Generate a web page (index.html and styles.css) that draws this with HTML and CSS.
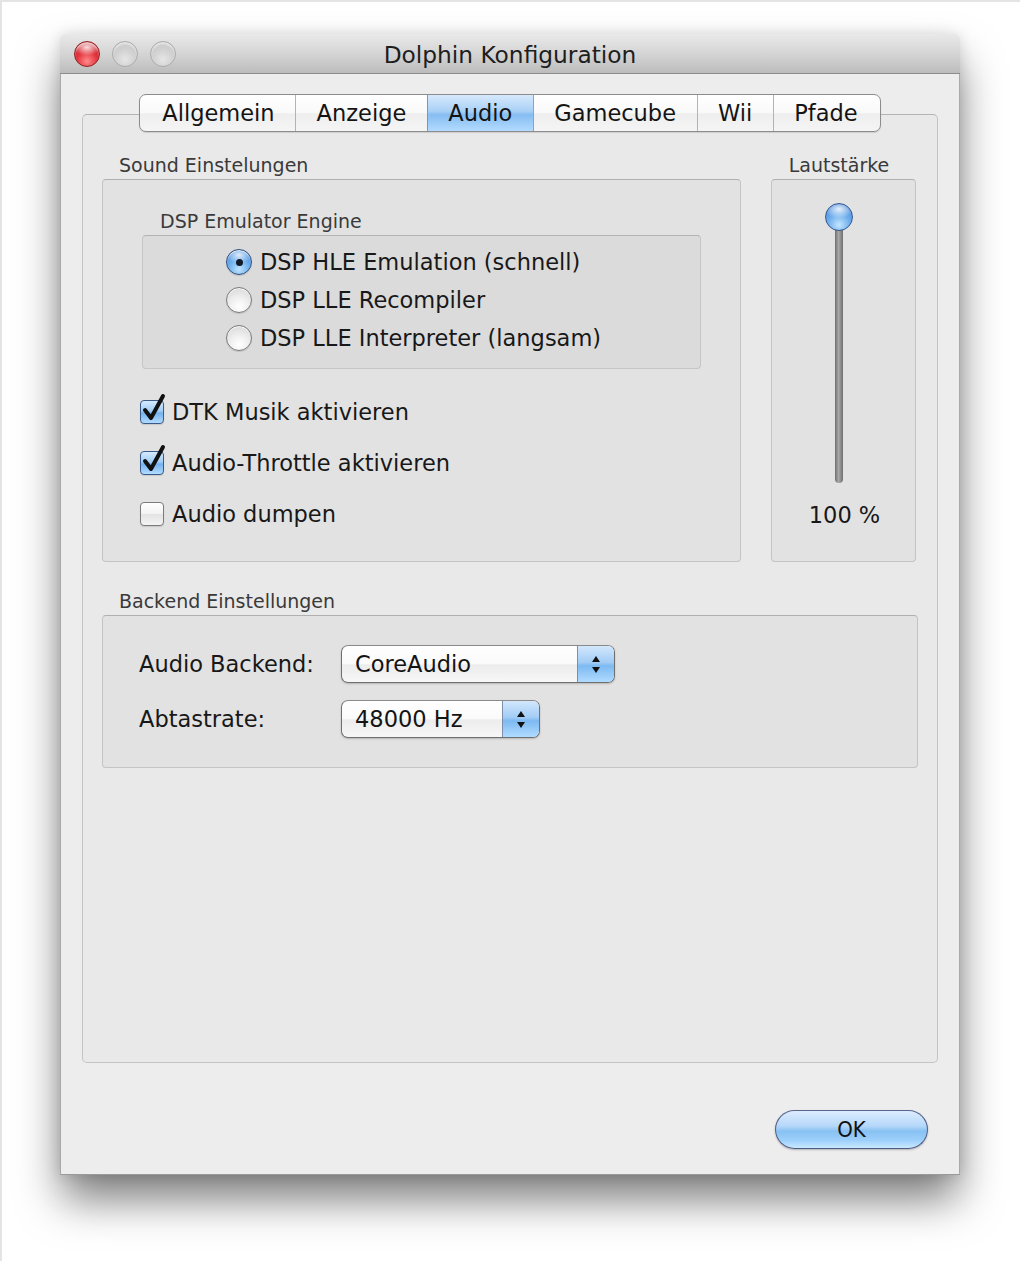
FILE: index.html
```html
<!DOCTYPE html>
<html lang="de">
<head>
<meta charset="utf-8">
<title>Dolphin Konfiguration</title>
<link rel="stylesheet" href="styles.css">
</head>
<body>
<div class="screen">
  <div class="window">
    <div class="titlebar">
      <div class="lights">
        <span class="light close"></span>
        <span class="light"></span>
        <span class="light"></span>
      </div>
      <div class="title">Dolphin Konfiguration</div>
      <div></div>
    </div>
    <div class="content">
      <div class="tabbox">
        <div class="tabs">
          <span class="tab">Allgemein</span>
          <span class="tab">Anzeige</span>
          <span class="tab selected">Audio</span>
          <span class="tab">Gamecube</span>
          <span class="tab">Wii</span>
          <span class="tab">Pfade</span>
        </div>

        <div class="top-row">
          <section class="group sound">
            <div class="group-label">Sound Einstelungen</div>
            <div class="group-box sound-box">
              <div class="sub-label">DSP Emulator Engine</div>
              <div class="inner-box">
                <div class="radio-row"><span class="radio on"></span><span>DSP HLE Emulation (schnell)</span></div>
                <div class="radio-row"><span class="radio"></span><span>DSP LLE Recompiler</span></div>
                <div class="radio-row"><span class="radio"></span><span>DSP LLE Interpreter (langsam)</span></div>
              </div>
              <div class="checks">
                <div class="check-row">
                  <span class="checkbox on"><svg class="tick" viewBox="0 0 28 30" width="28" height="30"><path d="M5 17 L11 25 L23 3" fill="none" stroke="#111" stroke-width="4" stroke-linecap="round" stroke-linejoin="round"/></svg></span>
                  <span>DTK Musik aktivieren</span>
                </div>
                <div class="check-row">
                  <span class="checkbox on"><svg class="tick" viewBox="0 0 28 30" width="28" height="30"><path d="M5 17 L11 25 L23 3" fill="none" stroke="#111" stroke-width="4" stroke-linecap="round" stroke-linejoin="round"/></svg></span>
                  <span>Audio-Throttle aktivieren</span>
                </div>
                <div class="check-row">
                  <span class="checkbox"></span>
                  <span>Audio dumpen</span>
                </div>
              </div>
            </div>
          </section>

          <section class="group volume">
            <div class="group-label vol-label">Lautstärke</div>
            <div class="group-box volume-box">
              <div class="slider">
                <span class="knob"></span>
                <span class="track"></span>
              </div>
              <div class="vol-value">100 %</div>
            </div>
          </section>
        </div>

        <section class="group backend">
          <div class="group-label">Backend Einstellungen</div>
          <div class="group-box backend-box">
            <div class="form-row">
              <span class="form-label">Audio Backend:</span>
              <div class="popup wide"><span class="popup-text">CoreAudio</span><span class="popup-arrows"><i class="up"></i><i class="down"></i></span></div>
            </div>
            <div class="form-row">
              <span class="form-label">Abtastrate:</span>
              <div class="popup narrow"><span class="popup-text">48000 Hz</span><span class="popup-arrows"><i class="up"></i><i class="down"></i></span></div>
            </div>
          </div>
        </section>
      </div>

      <div class="buttons">
        <button class="ok">OK</button>
      </div>
    </div>
  </div>
</div>
</body>
</html>
```

FILE: styles.css
```css
* { box-sizing: border-box; }

html, body {
  margin: 0;
  padding: 0;
  background: #ffffff;
}

body {
  font-family: "DejaVu Sans", "Lucida Grande", sans-serif;
  color: #181818;
}

.screen {
  width: 1020px;
  height: 1261px;
  border-top: 2px solid #e4e4e4;
  border-left: 2px solid #e4e4e4;
  padding: 32px 0 0 58px;
  background: #ffffff;
  overflow: hidden;
}

.window {
  width: 900px;
  height: 1141px;
  border-radius: 6px 6px 0 0;
  box-shadow: 0 26px 44px -2px rgba(0, 0, 0, 0.52), 0 0 14px rgba(0, 0, 0, 0.12);
  background: #ededed;
}

/* Title bar */
.titlebar {
  height: 40px;
  display: grid;
  grid-template-columns: 1fr auto 1fr;
  align-items: center;
  background: linear-gradient(#e9e9e9, #d3d3d3 55%, #bcbcbc);
  border-radius: 6px 6px 0 0;
  border-bottom: 1px solid #8d8d8d;
}

.lights {
  display: flex;
  gap: 12px;
  padding-left: 14px;
  padding-top: 1px;
}

.light {
  width: 26px;
  height: 26px;
  border-radius: 50%;
  border: 1px solid #acacac;
  background: radial-gradient(circle at 50% 72%, #e6e6e6 0, #d2d2d2 45%, #c2c2c2 100%);
  box-shadow: inset 0 2px 2px rgba(255,255,255,0.6);
}

.light.close {
  border-color: #8f2020;
  background:
    radial-gradient(ellipse 55% 35% at 50% 22%, rgba(255,255,255,0.85), rgba(255,255,255,0) 100%),
    radial-gradient(circle at 50% 80%, #ff8a8a 0, #e2333c 45%, #b5141c 100%);
}

.title {
  font-size: 23.3px;
  color: #1e1e1e;
  padding-top: 2px;
}

/* Content */
.content {
  height: 1101px;
  border-left: 1px solid #a9a9a9;
  border-right: 1px solid #a9a9a9;
  border-bottom: 1px solid #9a9a9a;
  padding: 40px 21px 0;
  display: flex;
  flex-direction: column;
}

.tabbox {
  height: 949px;
  border: 1px solid #c3c3c3;
  border-top-color: #b4b4b4;
  border-radius: 5px;
  background: #e9e9e9;
  padding: 0 19px;
}

.tabs {
  display: flex;
  width: fit-content;
  margin: -21px auto 0;
  height: 38px;
  border: 1px solid #8c8c8c;
  border-radius: 7px;
  overflow: hidden;
  background: linear-gradient(#ffffff, #f9f9f9 50%, #eeeeee 52%, #f5f5f5);
  box-shadow: 0 1px 1px rgba(0,0,0,0.12);
}

.tab {
  display: flex;
  align-items: center;
  padding: 0 20.5px;
  font-size: 22.5px;
  color: #141414;
  border-left: 1px solid #b3b3b3;
  line-height: 1;
}

.tab:first-child { border-left: none; padding-left: 22.5px; }
.tab:last-child { padding-right: 22.5px; }

.tab.selected {
  background: linear-gradient(#d6e9fc, #a9d0f6 45%, #86bdf1 55%, #b3dbff);
  border-left-color: #7f95b5;
}

.tab.selected + .tab { border-left-color: #8fa3bf; }

/* Groups */
.top-row {
  display: flex;
  gap: 30px;
  margin-top: 22px;
}

.group-label {
  font-size: 19px;
  line-height: 22px;
  color: #3a3a3a;
  padding-left: 17px;
  height: 22px;
  margin-bottom: 3px;
}

.group-box {
  border: 1px solid #c4c4c4;
  border-top-color: #b0b0b0;
  border-radius: 4px;
  background: #e2e2e2;
}

.sound { width: 639px; }
.volume { width: 145px; }

.sound-box, .volume-box { height: 383px; }

.sub-label {
  font-size: 19px;
  line-height: 22px;
  color: #3a3a3a;
  margin-top: 30px;
  padding-left: 57px;
}

.inner-box {
  margin: 3px 39px 0;
  height: 134px;
  border: 1px solid #c6c6c6;
  border-top-color: #b3b3b3;
  border-radius: 4px;
  background: #dbdbdb;
  padding: 7px 0 0 83px;
}

.radio-row {
  display: flex;
  align-items: center;
  gap: 8px;
  height: 38px;
  font-size: 22.5px;
}

.radio {
  width: 26px;
  height: 26px;
  border-radius: 50%;
  border: 1px solid #7b7b7b;
  background: radial-gradient(circle at 50% 78%, #ffffff 0, #f0f0f0 40%, #d3d3d3 100%);
  box-shadow: inset 0 1px 1px rgba(255,255,255,0.9), 0 1px 1px rgba(0,0,0,0.12);
  display: flex;
  align-items: center;
  justify-content: center;
  flex: none;
}

.radio.on {
  border-color: #2f4e7e;
  background:
    radial-gradient(ellipse 55% 35% at 50% 20%, rgba(255,255,255,0.8), rgba(255,255,255,0) 100%),
    radial-gradient(circle at 50% 80%, #bfe4ff 0, #6fb0ee 45%, #3c7fd2 100%);
}

.radio.on::after {
  content: "";
  width: 7px;
  height: 7px;
  border-radius: 50%;
  background: #121a26;
}

.checks {
  margin-top: 17px;
  padding-left: 37px;
}

.check-row {
  display: flex;
  align-items: center;
  gap: 8px;
  height: 51px;
  font-size: 22.5px;
}

.checkbox {
  position: relative;
  width: 24px;
  height: 24px;
  border-radius: 4px;
  border: 1px solid #7b7b7b;
  background: linear-gradient(#ffffff, #f2f2f2 50%, #e3e3e3 52%, #f4f4f4);
  box-shadow: 0 1px 1px rgba(0,0,0,0.12);
  flex: none;
}

.checkbox.on {
  border-color: #3a5a8a;
  background: linear-gradient(#d5eafe, #a2cdf6 45%, #74b1ee 55%, #b2dcff);
}

.tick {
  position: absolute;
  left: -1px;
  top: -8px;
}

/* Volume */
.vol-label {
  text-align: center;
  padding-left: 0;
  padding-right: 9px;
}

.volume-box {
  display: flex;
  flex-direction: column;
  align-items: center;
  padding-top: 23px;
  padding-right: 9px;
}

.slider {
  display: flex;
  flex-direction: column;
  align-items: center;
}

.knob {
  position: relative;
  z-index: 1;
  width: 28px;
  height: 28px;
  border-radius: 50%;
  border: 1px solid #36588f;
  background:
    radial-gradient(ellipse 55% 35% at 50% 20%, rgba(255,255,255,0.85), rgba(255,255,255,0) 100%),
    radial-gradient(circle at 50% 80%, #c3e6ff 0, #6eaeed 45%, #3a7bcf 100%);
}

.track {
  width: 8px;
  height: 266px;
  margin-top: -14px;
  border-radius: 4px;
  background: linear-gradient(90deg, #6d6d6d, #a9a9a9 45%, #8e8e8e 70%, #6f6f6f);
}

.vol-value {
  margin-top: 19px;
  font-size: 22.5px;
  line-height: 26px;
  padding-left: 11px;
}

/* Backend */
.backend { margin-top: 28px; }

.backend-box {
  height: 153px;
  padding: 29px 0 0 36px;
  display: flex;
  flex-direction: column;
  gap: 17px;
}

.form-row {
  display: grid;
  grid-template-columns: 202px auto;
  align-items: center;
  font-size: 22.5px;
}

.popup {
  display: flex;
  height: 38px;
  border: 1px solid #6f6f6f;
  border-top-color: #8a8a8a;
  border-radius: 7px;
  overflow: hidden;
  background: linear-gradient(#ffffff, #fafafa 50%, #ececec 52%, #f7f7f7);
  box-shadow: 0 1px 2px rgba(0,0,0,0.2);
}

.popup.wide { width: 274px; }
.popup.narrow { width: 199px; }

.popup-text {
  flex: 1;
  display: flex;
  align-items: center;
  padding-left: 13px;
  color: #141414;
}

.popup-arrows {
  width: 37px;
  display: flex;
  flex-direction: column;
  align-items: center;
  justify-content: center;
  gap: 5px;
  border-left: 1px solid #7d8ea8;
  background: linear-gradient(#d2e7fc, #a3cdf6 45%, #7db9f1 55%, #b0dbff);
}

.popup-arrows i {
  display: block;
  width: 0;
  height: 0;
  border-left: 4px solid transparent;
  border-right: 4px solid transparent;
}

.popup-arrows .up { border-bottom: 6px solid #111; }
.popup-arrows .down { border-top: 6px solid #111; }

/* Buttons */
.buttons {
  display: flex;
  justify-content: flex-end;
  margin-top: 47px;
  padding-right: 10px;
}

.ok {
  width: 153px;
  height: 39px;
  border-radius: 20px;
  border: 1px solid #4d5c82;
  border-top-color: #5a6690;
  background:
    linear-gradient(#dcecfe, #b6d8fa 40%, #88c1f3 55%, #9fd0fb 80%, #c9e9ff);
  box-shadow: 0 1px 2px rgba(0,0,0,0.25);
  font-family: "DejaVu Sans Condensed", "DejaVu Sans", sans-serif;
  font-size: 22px;
  color: #111;
  padding: 0;
}
```
